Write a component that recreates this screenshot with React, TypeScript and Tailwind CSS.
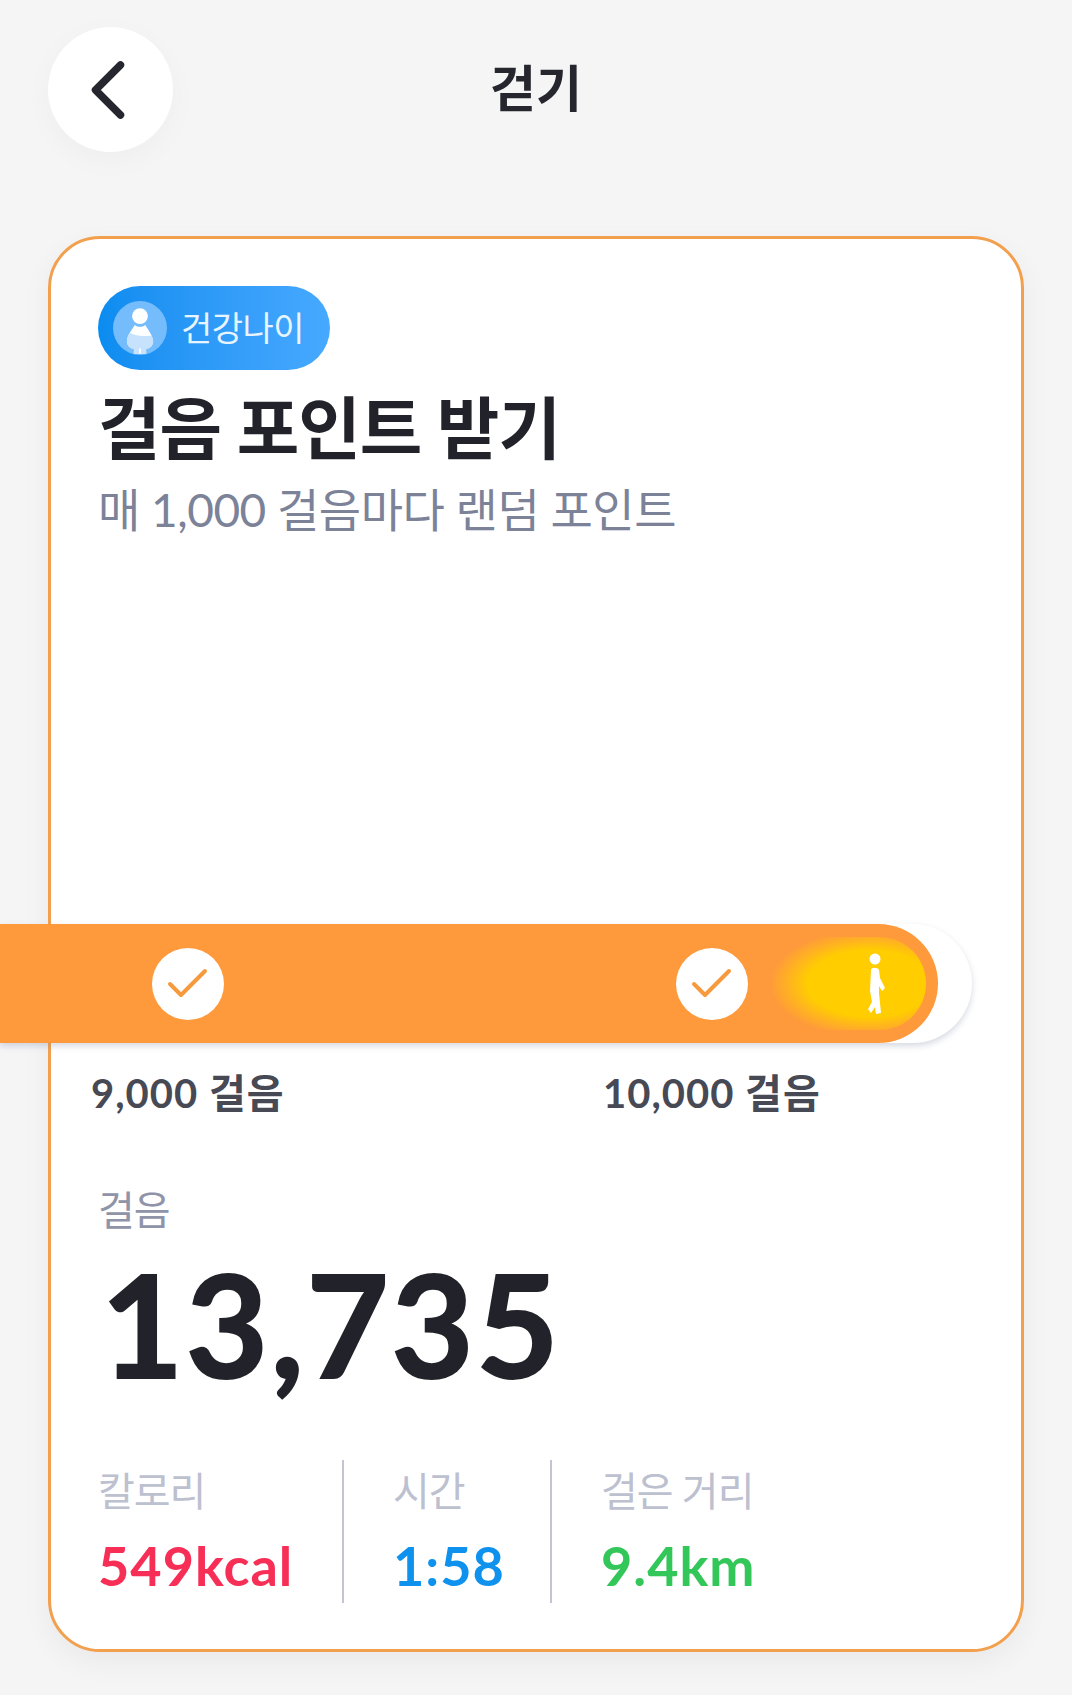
import React from 'react';
import { ChevronLeft } from 'lucide-react';

const font = { fontFamily: 'Lato, "Noto Sans CJK KR", sans-serif' };

const CheckDot = () => (
  <div className="w-[72px] h-[72px] rounded-full bg-white flex items-center justify-center shrink-0">
    <svg width="42" height="32" viewBox="0 0 42 32" fill="none">
      <path d="M3 16 L14 27 L38 3" stroke="#f79a3e" strokeWidth="4" strokeLinecap="round" strokeLinejoin="round" />
    </svg>
  </div>
);

const Walker = () => (
  <svg width="20" height="62" viewBox="0 0 20 62" fill="white">
    <circle cx="8" cy="6" r="5.5" />
    <path d="M4 17 C4 14 11 14 12 17 L13 25 L18 35 L15 38 L12 33 L12 40 L13 50 L14 60 L9 61 L8 54 L4 60 L1 56 L5 49 L3 38 Z" />
  </svg>
);

const Avatar = () => (
  <div className="w-[54px] h-[54px] rounded-full bg-[#74bcfb] flex items-center justify-center shrink-0 overflow-hidden">
    <svg width="28" height="46" viewBox="0 0 32 52" className="mt-[6px]">
      <circle cx="16" cy="9" r="9" fill="#ffffff" />
      <path d="M10 19 C13 22 19 22 22 19 C25 24 30 30 31 37 C31 43 27 46 23 46 L23 52 H9 L9 46 C5 46 1 43 1 37 C2 30 7 24 10 19 Z" fill="#ffffff" />
      <path d="M4 28 C10 31 18 33 29 31 C30 33 31 35 31 37 C31 43 27 46 23 46 L23 52 H17 V46 H15 V52 H9 L9 46 C5 46 1 43 1 37 C1 34 3 30 4 28 Z" fill="#c6e2fd" />
    </svg>
  </div>
);

const Stat = ({ label, value, color, cls }: { label: string; value: string; color: string; cls: string }) => (
  <div className={cls}>
    <p className="text-[40px] leading-[48px] text-[#bcc0cf] tracking-[-1px] mt-[7px]">{label}</p>
    <p className={`text-[54px] leading-[60px] font-bold tracking-[1px] mt-[21px] ${color}`}>{value}</p>
  </div>
);

export default function App() {
  return (
    <div className="w-[1072px] h-[1695px] bg-[#f5f5f6] overflow-hidden" style={font}>
      <div className="relative h-[236px] pl-[48px] pt-[27px]">
        <button className="w-[125px] h-[125px] rounded-full bg-white shadow-[0_8px_30px_rgba(0,0,0,0.03)] flex items-center justify-center text-[#26272e]">
          <ChevronLeft size={100} strokeWidth={1.8} className="-ml-[6px]" />
        </button>
        <h1 className="absolute left-0 right-0 top-[56px] text-center text-[50px] leading-[64px] font-bold text-[#26272e]">걷기</h1>
      </div>

      <div className="ml-[48px] w-[976px] h-[1416px] rounded-[52px] border-[3px] border-[#f2a04e] bg-white pl-[47px] pt-[47px] shadow-[0_10px_30px_rgba(0,0,0,0.05)]">
        <div className="w-[232px] h-[84px] rounded-full bg-gradient-to-r from-[#0a8cf0] to-[#46a9ff] flex items-center pl-[15px] gap-[14px]">
          <Avatar />
          <span className="text-[34px] leading-[40px] text-[#e8f4ff] tracking-[-0.5px]">건강나이</span>
        </div>
        <h2 className="mt-[18px] text-[68px] leading-[80px] font-bold text-[#22232a] tracking-[-1px]">걸음 포인트 받기</h2>
        <p className="mt-[14px] text-[46px] leading-[56px] text-[#7c8298] tracking-[-0.5px]">매 1,000 걸음마다 랜덤 포인트</p>

        <div className="-ml-[98px] mt-[386px] w-[972px] h-[119px] rounded-r-full bg-white shadow-[0_3px_6px_rgba(120,130,160,0.3)]">
          <div className="relative w-[938px] h-full rounded-r-full bg-[#fe9a3b] flex items-center pl-[152px] gap-[452px]">
            <CheckDot />
            <CheckDot />
            <div className="absolute right-[12px] top-[13px] bottom-[13px] w-[176px] rounded-r-full bg-[radial-gradient(ellipse_100px_54px_at_68%_50%,#ffcd00_62%,#ffb41f_80%,#fe9a3b_100%)] flex items-center justify-end pr-[39px]">
              <Walker />
            </div>
          </div>
        </div>

        <div className="-ml-[7px] mt-[25px] flex text-[40px] leading-[50px] font-bold tracking-[1px] text-[#474955]">
          <span className="w-[512px]">9,000 걸음</span>
          <span>10,000 걸음</span>
        </div>

        <p className="mt-[70px] text-[40px] leading-[44px] text-[#8f94a8] tracking-[-1px]">걸음</p>
        <p className="mt-[21px] text-[142px] leading-[140px] font-bold text-[#22232a] pl-[3px] tracking-[2.5px] [-webkit-text-stroke:2px_#22232a]">13,735</p>

        <div className="mt-[67px] flex h-[143px]">
          <Stat label="칼로리" value="549kcal" color="text-[#f72f57]" cls="w-[246px] border-r-2 border-[#c3c6d2]" />
          <Stat label="시간" value="1:58" color="text-[#0f92ee]" cls="w-[208px] pl-[49px] border-r-2 border-[#c3c6d2]" />
          <Stat label="걸은 거리" value="9.4km" color="text-[#33c659]" cls="pl-[49px]" />
        </div>
      </div>
    </div>
  );
}
